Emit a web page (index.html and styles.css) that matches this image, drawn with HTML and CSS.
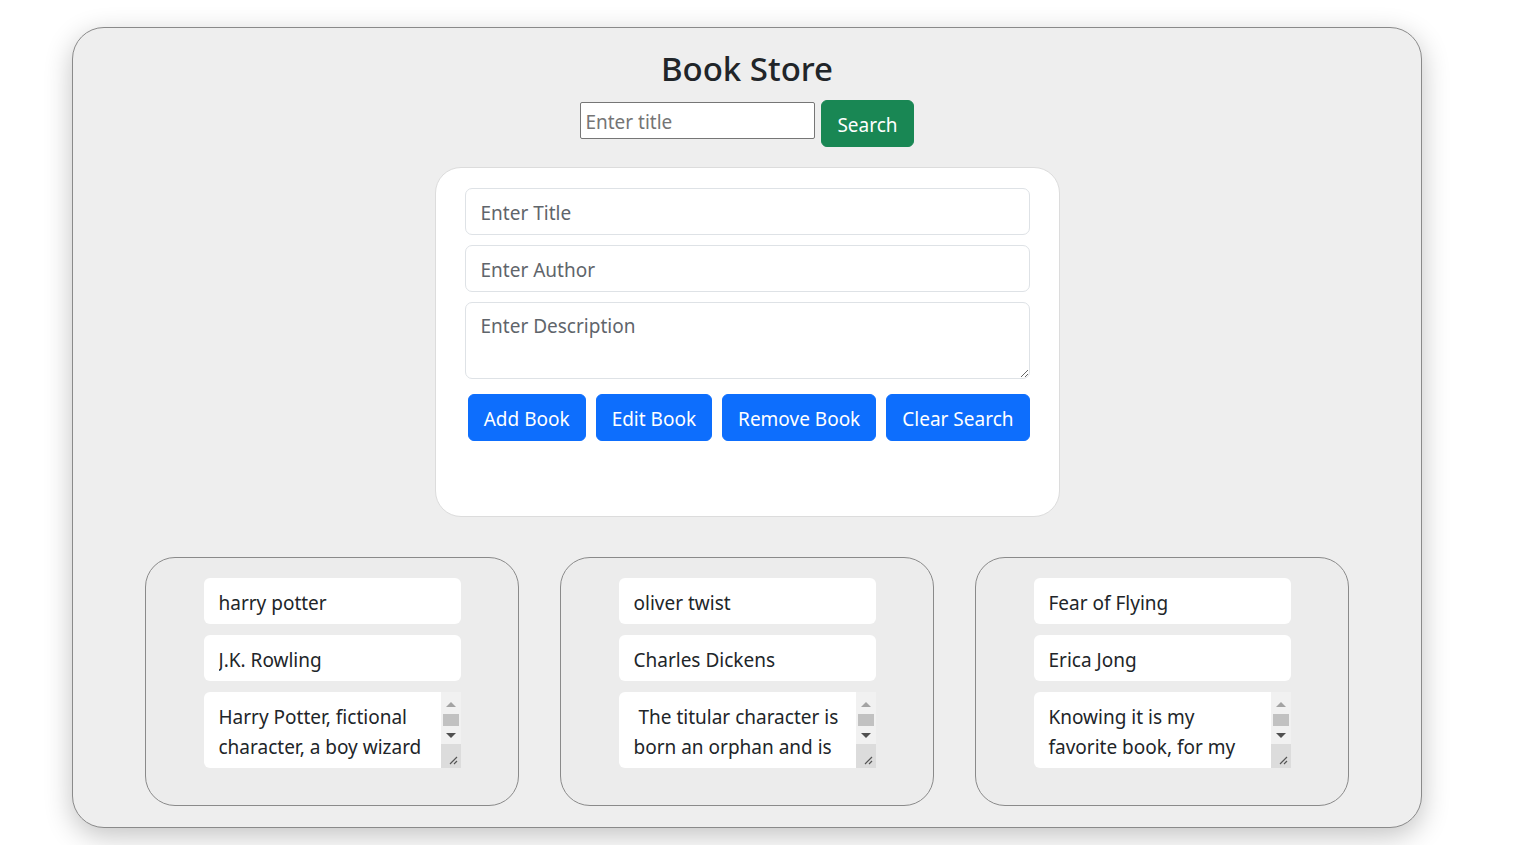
FILE: index.html
```html
<!DOCTYPE html>
<html lang="en">
<head>
<meta charset="utf-8">
<title>Book Store</title>
<link rel="stylesheet" href="styles.css">
</head>
<body>
<div class="app">
  <h1 class="title">Book Store</h1>
  <div class="search-row">
    <input class="search-input" type="text" placeholder="Enter title">
    <button class="btn btn-green">Search</button>
  </div>
  <div class="form-card">
    <input class="field" type="text" placeholder="Enter Title">
    <input class="field" type="text" placeholder="Enter Author">
    <textarea class="field field-area" rows="2" placeholder="Enter Description"></textarea>
    <div class="actions">
      <button class="btn btn-blue">Add Book</button>
      <button class="btn btn-blue">Edit Book</button>
      <button class="btn btn-blue">Remove Book</button>
      <button class="btn btn-blue">Clear Search</button>
    </div>
  </div>
  <div class="books">
    <div class="book">
      <input class="book-field" type="text" value="harry potter">
      <input class="book-field" type="text" value="J.K. Rowling">
      <div class="book-desc">
        <textarea class="book-area" rows="2">Harry Potter, fictional character, a boy wizard created by British author J.K. Rowling in a series of seven novels.</textarea>
        <div class="scrollbar">
          <div class="sb-btn"><span class="arrow-up"></span></div>
          <div class="sb-thumb"></div>
          <div class="sb-btn"><span class="arrow-down"></span></div>
          <div class="sb-corner"><svg width="10" height="10" viewBox="0 0 10 10"><path d="M9 2 L2 9 M9 6 L6 9" stroke="#555" stroke-width="1.2" fill="none"/></svg></div>
        </div>
      </div>
    </div>
    <div class="book">
      <input class="book-field" type="text" value="oliver twist">
      <input class="book-field" type="text" value="Charles Dickens">
      <div class="book-desc">
        <textarea class="book-area" rows="2"> The titular character is born an orphan and is raised in a workhouse before escaping to London.</textarea>
        <div class="scrollbar">
          <div class="sb-btn"><span class="arrow-up"></span></div>
          <div class="sb-thumb"></div>
          <div class="sb-btn"><span class="arrow-down"></span></div>
          <div class="sb-corner"><svg width="10" height="10" viewBox="0 0 10 10"><path d="M9 2 L2 9 M9 6 L6 9" stroke="#555" stroke-width="1.2" fill="none"/></svg></div>
        </div>
      </div>
    </div>
    <div class="book">
      <input class="book-field" type="text" value="Fear of Flying">
      <input class="book-field" type="text" value="Erica Jong">
      <div class="book-desc">
        <textarea class="book-area" rows="2">Knowing it is my favorite book, for my whole life I have read it again and again.</textarea>
        <div class="scrollbar">
          <div class="sb-btn"><span class="arrow-up"></span></div>
          <div class="sb-thumb"></div>
          <div class="sb-btn"><span class="arrow-down"></span></div>
          <div class="sb-corner"><svg width="10" height="10" viewBox="0 0 10 10"><path d="M9 2 L2 9 M9 6 L6 9" stroke="#555" stroke-width="1.2" fill="none"/></svg></div>
        </div>
      </div>
    </div>
  </div>
</div>
</body>
</html>
```

FILE: styles.css
```css
* { box-sizing: border-box; }

html, body {
  margin: 0;
  padding: 0;
  background: #ffffff;
}

body {
  font-family: "Noto Sans", "Open Sans", sans-serif;
  color: #212529;
  padding: 27px 0 0 72px;
  min-height: 845px;
}

.app {
  width: 1350px;
  height: 801px;
  background: #eeeeee;
  border: 1px solid #8a8a8a;
  border-radius: 32px;
  box-shadow: 0 8px 28px rgba(0, 0, 0, 0.24);
  display: flex;
  flex-direction: column;
  align-items: center;
  padding-top: 18px;
}

.title {
  margin: 0;
  font-size: 33px;
  font-weight: 500;
  line-height: 46px;
  color: #212529;
  height: 54px;
}

.search-row {
  display: flex;
  align-items: flex-start;
  gap: 6px;
}

.search-input {
  margin-top: 2px;
  width: 235px;
  height: 37px;
  font-family: inherit;
  font-size: 19px;
  padding: 3px 4px 1px;
  border: 1px solid #767676;
  border-radius: 2px;
  background: #fff;
  color: #212529;
}

.search-input::placeholder { color: #757575; }

.btn {
  font-family: inherit;
  font-size: 19px;
  line-height: 29px;
  padding: 10px 16px 6px;
  border: 1px solid transparent;
  border-radius: 6px;
  color: #fff;
  cursor: pointer;
  white-space: nowrap;
}

.btn-green { background: #198754; border-color: #198754; padding-left: 15px; padding-right: 15px; }
.btn-blue { background: #0d6efd; border-color: #0d6efd; }

.form-card {
  margin-top: 20px;
  width: 625px;
  height: 350px;
  background: #ffffff;
  border: 1px solid #dcdcdc;
  border-radius: 26px;
  padding: 20px 29px 0 29px;
  display: flex;
  flex-direction: column;
  gap: 10px;
}

.field {
  display: block;
  width: 100%;
  font-family: inherit;
  font-size: 19px;
  line-height: 29px;
  padding: 9px 15px 7px;
  border: 1px solid #dee2e6;
  border-radius: 7px;
  background: #fff;
  color: #212529;
  height: 47px;
}

.field::placeholder { color: #5f656b; }

.field-area {
  height: 77px;
  resize: vertical;
}

.actions {
  margin-top: 5px;
  display: flex;
  justify-content: flex-end;
  gap: 10px;
}

.actions .btn { padding-left: 15px; padding-right: 15px; }

.books {
  margin-top: 40px;
  display: flex;
  gap: 41px;
}

.book {
  width: 374px;
  height: 249px;
  background: #ececec;
  border: 1px solid #8a8a8a;
  border-radius: 30px;
  padding-top: 20px;
  display: flex;
  flex-direction: column;
  align-items: center;
  gap: 11px;
}

.book-field {
  display: block;
  width: 257px;
  height: 46px;
  font-family: inherit;
  font-size: 19px;
  line-height: 30px;
  padding: 10px 15px 6px;
  border: none;
  border-radius: 6px;
  background: #fff;
  color: #212529;
}

.book-desc {
  width: 257px;
  height: 76px;
  display: flex;
  background: #fff;
  border-radius: 6px 0 0 6px;
  overflow: hidden;
}

.book-area {
  flex: 1;
  min-width: 0;
  height: 76px;
  font-family: inherit;
  font-size: 19px;
  line-height: 30px;
  padding: 10px 6px 6px 15px;
  border: none;
  background: transparent;
  color: #212529;
  resize: none;
  overflow: hidden;
}

.scrollbar {
  width: 20px;
  flex: 0 0 20px;
  background: #f1f1f1;
  display: flex;
  flex-direction: column;
  align-items: center;
}

.sb-btn {
  height: 18px;
  width: 100%;
  display: flex;
  align-items: center;
  justify-content: center;
}

.sb-btn:first-child { height: 22px; padding-top: 3px; }

.arrow-up {
  width: 0;
  height: 0;
  border-left: 5px solid transparent;
  border-right: 5px solid transparent;
  border-bottom: 5px solid #a3a3a3;
}

.arrow-down {
  width: 0;
  height: 0;
  border-left: 5px solid transparent;
  border-right: 5px solid transparent;
  border-top: 5px solid #505050;
}

.sb-thumb {
  width: 16px;
  height: 12px;
  background: #c1c1c1;
}

.sb-corner {
  flex: 1;
  width: 100%;
  background: #dcdcdc;
  display: flex;
  align-items: flex-end;
  justify-content: flex-end;
  padding: 0 3px 3px 0;
}

.sb-corner svg { display: block; }
```
